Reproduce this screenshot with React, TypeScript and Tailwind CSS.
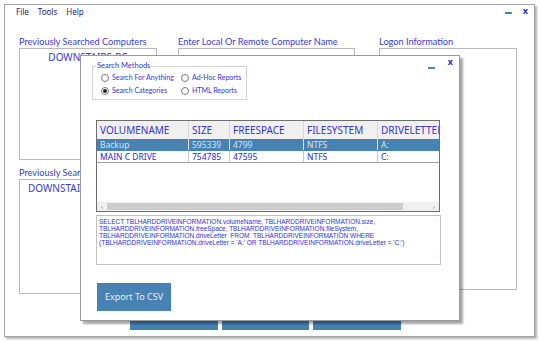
import React from "react";

const font = { fontFamily: '"Noto Sans", "Open Sans", sans-serif' };
const lato = { fontFamily: 'Lato, "Noto Sans", sans-serif' };

function Radio({ checked, label }: { checked?: boolean; label: string }) {
  return (
    <div className="flex items-center gap-[3px] h-[13px]">
      <span className="flex items-center justify-center w-[8px] h-[8px] rounded-full border border-[#7a7a7a] bg-white shrink-0">
        {checked && <span className="w-[4px] h-[4px] rounded-full bg-[#222]" />}
      </span>
      <span className="text-[7px] text-[#3434d8] leading-none whitespace-nowrap" style={lato}>{label}</span>
    </div>
  );
}

const cols = [
  { name: "VOLUMENAME", w: "w-[92px]" },
  { name: "SIZE", w: "w-[41px]" },
  { name: "FREESPACE", w: "w-[74px]" },
  { name: "FILESYSTEM", w: "w-[74px]" },
  { name: "DRIVELETTER", w: "w-[80px]" },
];

const rows = [
  ["Backup", "595339", "4799", "NTFS", "A:"],
  ["MAIN C DRIVE", "754785", "47595", "NTFS", "C:"],
];

const labelCls = "h-[13px] text-[9.2px] leading-[13px] text-[#3b3bd0] whitespace-nowrap";

export default function App() {
  return (
    <div className="w-[540px] h-[342px] bg-white overflow-hidden" style={font}>
      <div className="relative ml-[4px] mt-[4px] w-[531px] h-[333px] border border-[#a5a5a5] bg-white shadow-[2px_2px_2px_rgba(0,0,0,0.3)]">
        {/* window controls */}
        <div className="absolute right-[22px] top-[7px] w-[7px] h-[2px] bg-[#4a86b8]" />
        <div className="absolute right-[6px] top-[1px] text-[9px] font-bold text-[#2b2bd8] leading-none">x</div>

        {/* menu */}
        <div className="flex gap-[9px] pl-[11px] pt-[2px] h-[13px] text-[8px] text-[#20208a] leading-[10px]">
          <span>File</span>
          <span>Tools</span>
          <span>Help</span>
        </div>

        {/* columns */}
        <div className="flex pl-[14px] mt-[17px]">
          <div className="w-[138px] flex flex-col">
            <div className={labelCls} style={lato}>Previously Searched Computers</div>
            <div className="h-[112px] border border-[#b9b9b9] text-[10px] text-[#3a3ad0] text-center leading-[14px] pt-[1px]">DOWNSTAIRS-PC</div>
            <div className={`mt-[6px] ${labelCls}`} style={lato}>Previously Searched Computers</div>
            <div className="h-[115px] border border-[#b9b9b9] text-[10px] text-[#3a3ad0] leading-[14px] pl-[8px] pt-[1px]">DOWNSTAIRS-PC</div>
          </div>
          <div className="w-[177px] ml-[21px] flex flex-col">
            <div className={labelCls} style={lato}>Enter Local Or Remote Computer Name</div>
            <div className="h-[20px] border border-[#b9b9b9]" />
          </div>
          <div className="w-[138px] ml-[24px] flex flex-col">
            <div className={labelCls} style={lato}>Logon Information</div>
            <div className="h-[242px] border border-[#b9b9b9]" />
          </div>
        </div>

        {/* bottom buttons */}
        <div className="flex gap-[4px] ml-[125px] mt-[12px]">
          <div className="w-[88px] h-[24px] bg-[#4682b4]" />
          <div className="w-[87px] h-[24px] bg-[#4682b4]" />
          <div className="w-[88px] h-[24px] bg-[#4682b4]" />
        </div>

        {/* dialog */}
        <div className="absolute left-[75px] top-[50px] w-[380px] h-[266px] border border-[#9a9a9a] bg-white shadow-[3px_3px_2px_rgba(0,0,0,0.35)]">
          <div className="absolute right-[24px] top-[11px] w-[7px] h-[2px] bg-[#4a86b8]" />
          <div className="absolute right-[6px] top-[1px] text-[9px] font-bold text-[#2b2bd8] leading-none">x</div>

          <div className="pl-[11px] pt-[5px]">
            <fieldset className="w-[155px] h-[39px] border border-[#d4d4d4] pl-[8px] pr-[4px] pt-[0px]">
              <legend className="text-[7.5px] text-[#3434d8] px-[1px] ml-[-5px] leading-[10px]" style={lato}>Search Methods</legend>
              <div className="flex">
                <div className="w-[80px] flex flex-col">
                  <Radio label="Search For Anything" />
                  <Radio checked label="Search Categories" />
                </div>
                <div className="flex flex-col">
                  <Radio label="Ad-Hoc Reports" />
                  <Radio label="HTML Reports" />
                </div>
              </div>
            </fieldset>
          </div>

          {/* grid */}
          <div className="ml-[15px] mt-[20px] w-[344px] h-[92px] border border-[#6e6e6e] bg-white flex flex-col overflow-hidden">
            <div className="flex h-[18px] bg-[#f0f0f0] shrink-0">
              {cols.map((c) => (
                <div key={c.name} className={`${c.w} shrink-0 border-r border-[#d8d8d8] pl-[3px] text-[10px] leading-[18px] text-[#3535cf] whitespace-nowrap overflow-hidden`}>
                  {c.name}
                </div>
              ))}
            </div>
            {rows.map((r, i) => (
              <div key={i} className={`flex h-[12px] shrink-0 border-b ${i === 0 ? "bg-[#4682b4] border-[#4682b4]" : "bg-white border-[#a0a0a0]"}`}>
                {r.map((v, j) => (
                  <div key={j} className={`${cols[j].w} shrink-0 border-r ${i === 0 ? "border-[#e0e0e0] text-[#dde4ee]" : "border-[#c8c8c8] text-[#2b2be0]"} pl-[3px] text-[8.5px] leading-[11px] whitespace-nowrap`}>
                    {v}
                  </div>
                ))}
              </div>
            ))}
            <div className="flex-1" />
            <div className="h-[9px] bg-[#f0f0f0] flex items-center shrink-0">
              <span className="w-[10px] text-[6px] text-[#555] text-center leading-none">‹</span>
              <div className="w-[296px] h-[7px] bg-[#cdcdcd]" />
              <div className="flex-1" />
              <span className="w-[10px] text-[6px] text-[#555] text-center leading-none">›</span>
            </div>
          </div>

          {/* sql textbox */}
          <div className="ml-[15px] mt-[3px] w-[345px] h-[50px] border border-[#c2c2c2] flex">
            <div className="flex-1 pl-[2px] pt-[2px] text-[6.5px] leading-[7px] text-[#3030e0]" style={{ fontFamily: '"Liberation Sans", Arial, sans-serif' }}>
              <div className="whitespace-nowrap">SELECT TBLHARDDRIVEINFORMATION.volumeName, TBLHARDDRIVEINFORMATION.size,</div>
              <div className="whitespace-nowrap">TBLHARDDRIVEINFORMATION.freeSpace, TBLHARDDRIVEINFORMATION.fileSystem,</div>
              <div className="whitespace-nowrap">TBLHARDDRIVEINFORMATION.driveLetter&nbsp; FROM&nbsp; TBLHARDDRIVEINFORMATION WHERE</div>
              <div className="whitespace-nowrap">(TBLHARDDRIVEINFORMATION.driveLetter = 'A:' OR TBLHARDDRIVEINFORMATION.driveLetter = 'C:')</div>
            </div>
            <div className="w-[10px] flex flex-col items-center justify-between py-[3px] text-[6px] text-[#9a9a9a] leading-none">
              <span>˄</span>
              <span>˅</span>
            </div>
          </div>

          {/* export */}
          <div className="ml-[16px] mt-[18px] w-[74px] h-[28px] bg-[#4682b4] flex items-center justify-center text-[9px] text-[#e6edf5]">
            Export To CSV
          </div>
        </div>
      </div>
    </div>
  );
}
